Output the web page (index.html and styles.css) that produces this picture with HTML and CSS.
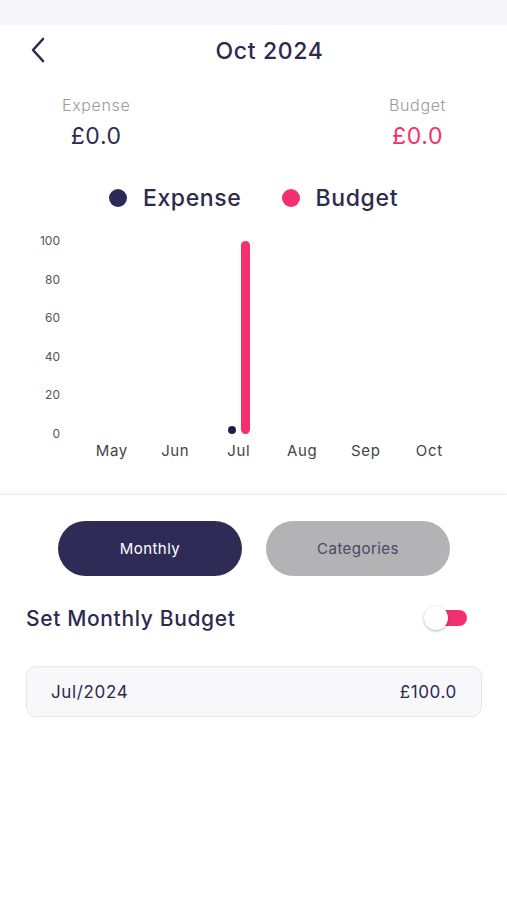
FILE: index.html
```html
<!DOCTYPE html>
<html>
<head>
    <title>Budget</title>
    <link rel="stylesheet" href="styles.css">
</head>
<body>
    <div class="status-bar"></div>
    <div class="header">
        <button class="back" aria-label="Back">
            <svg width="16" height="26" viewBox="0 0 16 26"><path d="M13 2 L3 13 L13 24" fill="none" stroke="#2d2a4e" stroke-width="2.6" stroke-linecap="round" stroke-linejoin="round"/></svg>
        </button>
        <h1>Oct 2024</h1>
    </div>

    <div class="totals">
        <div class="total">
            <div class="total-label">Expense</div>
            <div class="total-value">£0.0</div>
        </div>
        <div class="total">
            <div class="total-label">Budget</div>
            <div class="total-value pink">£0.0</div>
        </div>
    </div>

    <div class="legend">
        <span class="legend-item"><span class="dot dark"></span>Expense</span>
        <span class="legend-item"><span class="dot pink-bg"></span>Budget</span>
    </div>

    <div class="chart">
        <div class="y-axis">
            <span>100</span><span>80</span><span>60</span><span>40</span><span>20</span><span>0</span>
        </div>
        <div class="plot">
            <div class="col"></div>
            <div class="col"></div>
            <div class="col">
                <span class="point"></span>
                <span class="bar" style="height: 100%"></span>
            </div>
            <div class="col"></div>
            <div class="col"></div>
            <div class="col"></div>
        </div>
        <div class="x-axis">
            <span>May</span><span>Jun</span><span>Jul</span><span>Aug</span><span>Sep</span><span>Oct</span>
        </div>
    </div>

    <div class="panel">
        <div class="tabs">
            <button class="tab active">Monthly</button>
            <button class="tab">Categories</button>
        </div>
        <div class="setting">
            <span>Set Monthly Budget</span>
            <span class="toggle"><span class="thumb"></span></span>
        </div>
        <div class="budget-row">
            <span>Jul/2024</span>
            <span>£100.0</span>
        </div>
    </div>
</body>
</html>
```

FILE: styles.css
```css
body {
    margin: 0;
    width: 507px;
    min-height: 900px;
    background-color: #fff;
    font-family: Inter, "Noto Sans", sans-serif;
    letter-spacing: 0.04em;
    color: #2d2a4e;
}
.status-bar {
    height: 25px;
    background-color: #f6f5f8;
}
.header {
    height: 50px;
    display: flex;
    align-items: center;
    justify-content: center;
    position: relative;
}
.back {
    position: absolute;
    left: 30px;
    top: 12px;
    border: none;
    background: none;
    padding: 0;
}
.header h1 {
    margin: 1px 0 0 32px;
    font-size: 23px;
    font-weight: 500;
}
.totals {
    display: flex;
    justify-content: space-between;
    padding: 20px 61px 0 62px;
}
.total {
    text-align: center;
}
.total-label {
    font-size: 16px;
    line-height: 20px;
    color: #9b9b9b;
    font-weight: 300;
}
.total-value {
    font-size: 23px;
    line-height: 30px;
    margin-top: 6px;
}
.pink {
    color: #f3306f;
}
.legend {
    display: flex;
    justify-content: center;
    gap: 40px;
    margin-top: 33px;
    font-size: 23px;
    line-height: 28px;
    font-weight: 500;
}
.legend-item {
    display: flex;
    align-items: center;
    gap: 16px;
}
.dot {
    width: 18px;
    height: 18px;
    border-radius: 50%;
}
.dark {
    background-color: #2d2a57;
}
.pink-bg {
    background-color: #f3306f;
}
.chart {
    display: grid;
    grid-template-columns: 34px 381px;
    column-gap: 20px;
    padding: 22px 0 0 26px;
}
.y-axis {
    display: flex;
    flex-direction: column;
    justify-content: space-between;
    align-items: flex-end;
    height: 207px;
    font-size: 12px;
    line-height: 14px;
    letter-spacing: 0;
    color: #555;
}
.plot {
    display: grid;
    grid-template-columns: repeat(6, 1fr);
    padding: 7px 0;
    height: 193px;
}
.col {
    display: flex;
    justify-content: center;
    align-items: flex-end;
    gap: 5px;
}
.point {
    width: 8px;
    height: 8px;
    border-radius: 50%;
    background-color: #1f1c45;
}
.bar {
    width: 9px;
    border-radius: 5px;
    background-color: #f3306f;
}
.x-axis {
    grid-column: 2;
    display: grid;
    grid-template-columns: repeat(6, 1fr);
    text-align: center;
    font-size: 15px;
    line-height: 18px;
    color: #444;
    margin-top: 1px;
}
.panel {
    margin-top: 34px;
    border-top: 1px solid #efeff1;
    box-shadow: 0 -2px 3px rgba(0, 0, 0, 0.03);
    padding: 26px 25px 0 26px;
}
.tabs {
    display: flex;
    justify-content: center;
    gap: 24px;
}
.tab {
    width: 184px;
    height: 55px;
    border: none;
    border-radius: 28px;
    font-family: inherit;
    font-size: 15px;
    letter-spacing: 0.03em;
    background-color: #b3b2b4;
    color: #4a4860;
}
.tab.active {
    background-color: #2f2b57;
    color: #fff;
}
.setting {
    display: flex;
    justify-content: space-between;
    align-items: center;
    margin-top: 28px;
    font-size: 21px;
    font-weight: 500;
    height: 28px;
    padding-right: 15px;
}
.toggle {
    position: relative;
    width: 34px;
    height: 16px;
    border-radius: 8px;
    background-color: #f3306f;
}
.thumb {
    position: absolute;
    left: -9px;
    top: -4px;
    width: 24px;
    height: 24px;
    border-radius: 50%;
    background-color: #fff;
    box-shadow: 0 1px 3px rgba(0, 0, 0, 0.3);
}
.budget-row {
    display: flex;
    justify-content: space-between;
    align-items: center;
    margin-top: 34px;
    height: 49px;
    padding: 0 24px;
    border: 1px solid #e6e6ea;
    border-radius: 10px;
    background-color: #f8f8fa;
    font-size: 17px;
    color: #2d2a4e;
}
```
